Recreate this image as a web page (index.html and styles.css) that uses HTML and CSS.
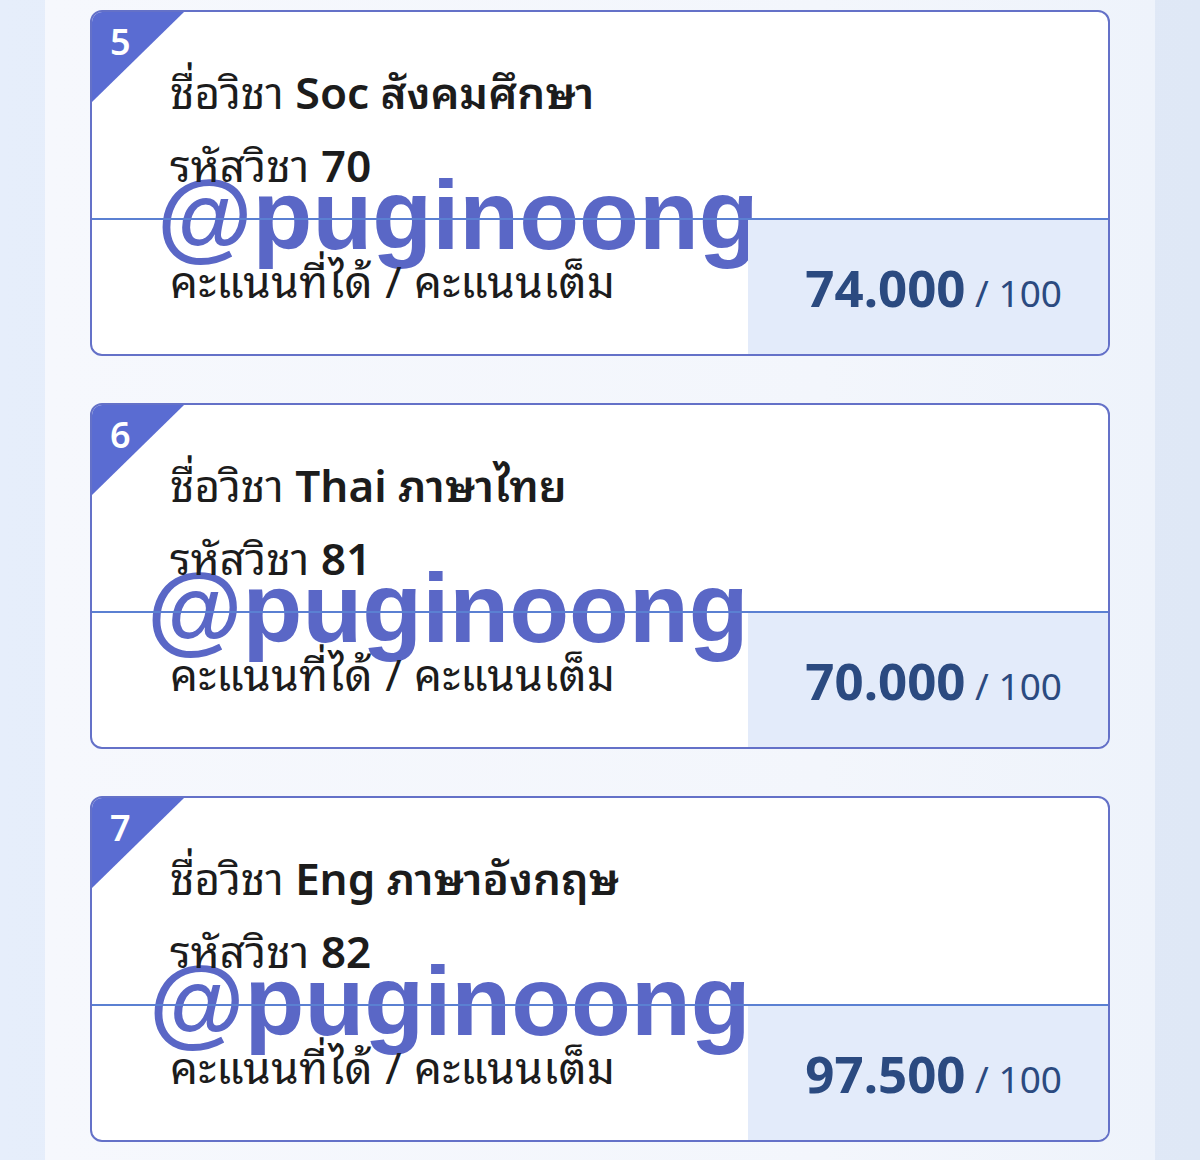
FILE: index.html
```html
<!doctype html>
<html lang="th">
<head>
    <meta charset="UTF-8">
    <meta name="viewport" content="width=device-width, initial-scale=1.0">
    <title>ผลการเรียน</title>
    <link rel="stylesheet" href="styles.css">
</head>
<body>
    <div class="page">
        <div class="course-card">
            <div class="watermark">@puginoong</div>
            <div class="badge"><span>5</span></div>
            <div class="course-info">
                <div class="course-line">ชื่อวิชา <b>Soc สังคมศึกษา</b></div>
                <div class="course-line">รหัสวิชา <b>70</b></div>
            </div>
            <div class="course-score">
                <div class="score-label">คะแนนที่ได้ / คะแนนเต็ม</div>
                <div class="score-value"><strong>74.000</strong> / 100</div>
            </div>
        </div>

        <div class="course-card">
            <div class="watermark">@puginoong</div>
            <div class="badge"><span>6</span></div>
            <div class="course-info">
                <div class="course-line">ชื่อวิชา <b>Thai ภาษาไทย</b></div>
                <div class="course-line">รหัสวิชา <b>81</b></div>
            </div>
            <div class="course-score">
                <div class="score-label">คะแนนที่ได้ / คะแนนเต็ม</div>
                <div class="score-value"><strong>70.000</strong> / 100</div>
            </div>
        </div>

        <div class="course-card">
            <div class="watermark">@puginoong</div>
            <div class="badge"><span>7</span></div>
            <div class="course-info">
                <div class="course-line">ชื่อวิชา <b>Eng ภาษาอังกฤษ</b></div>
                <div class="course-line">รหัสวิชา <b>82</b></div>
            </div>
            <div class="course-score">
                <div class="score-label">คะแนนที่ได้ / คะแนนเต็ม</div>
                <div class="score-value"><strong>97.500</strong> / 100</div>
            </div>
        </div>
    </div>
</body>
</html>
```

FILE: styles.css
```css
body {
    margin: 0;
    background: linear-gradient(90deg, #e6eefb 0%, #dfe8f6 100%);
    font-family: 'Noto Sans Thai Looped', 'Noto Sans', sans-serif;
    color: #1c1c1c;
}

.page {
    margin: 0 45px;
    padding: 10px 45px 20px;
    min-height: 1160px;
    box-sizing: border-box;
    background: linear-gradient(90deg, #f6f8fd 0%, #f3f6fc 70%, #eef3fb 100%);
    display: flex;
    flex-direction: column;
    gap: 47px;
}

.course-card {
    position: relative;
    height: 346px;
    box-sizing: border-box;
    border: 2px solid #6471c8;
    border-radius: 12px;
    background: #fff;
    overflow: hidden;
    display: flex;
    flex-direction: column;
}

.badge {
    position: absolute;
    top: 0;
    left: 0;
    z-index: 2;
    width: 92px;
    height: 90px;
    background: #5a6cd2;
    clip-path: polygon(0 0, 100% 0, 0 100%);
}

.badge span {
    position: absolute;
    left: 18px;
    top: 8px;
    color: #fff;
    font-family: 'Noto Sans', sans-serif;
    font-size: 36px;
    font-weight: 600;
    line-height: 44px;
}

.course-info {
    position: relative;
    z-index: 1;
    height: 208px;
    box-sizing: border-box;
    padding: 41px 0 0 78px;
    border-bottom: 2px solid #5b80d2;
}

.course-line {
    font-size: 44px;
    line-height: 73px;
    white-space: nowrap;
}

.course-line b {
    font-weight: 600;
}

.course-score {
    position: relative;
    z-index: 1;
    flex: 1;
    display: flex;
}

.score-label {
    flex: 1;
    padding: 22px 0 0 78px;
    font-size: 44px;
    line-height: 73px;
    letter-spacing: 0.5px;
    white-space: nowrap;
}

.score-value {
    width: 360px;
    box-sizing: border-box;
    padding: 31px 46px 0 0;
    background: #e3ebfa;
    text-align: right;
    color: #2b4a80;
    font-family: 'Noto Sans', sans-serif;
    font-size: 37px;
    line-height: 73px;
}

.score-value strong {
    font-size: 51px;
    font-weight: 700;
}

.watermark {
    position: absolute;
    top: 148px;
    left: 65px;
    z-index: 0;
    font-family: 'Liberation Sans', Arial, sans-serif;
    font-weight: 700;
    font-size: 98px;
    line-height: 110px;
    color: #5a67c6;
    white-space: nowrap;
}

.course-card:nth-child(2) .watermark { left: 55px; }
.course-card:nth-child(3) .watermark { left: 57px; }
```
